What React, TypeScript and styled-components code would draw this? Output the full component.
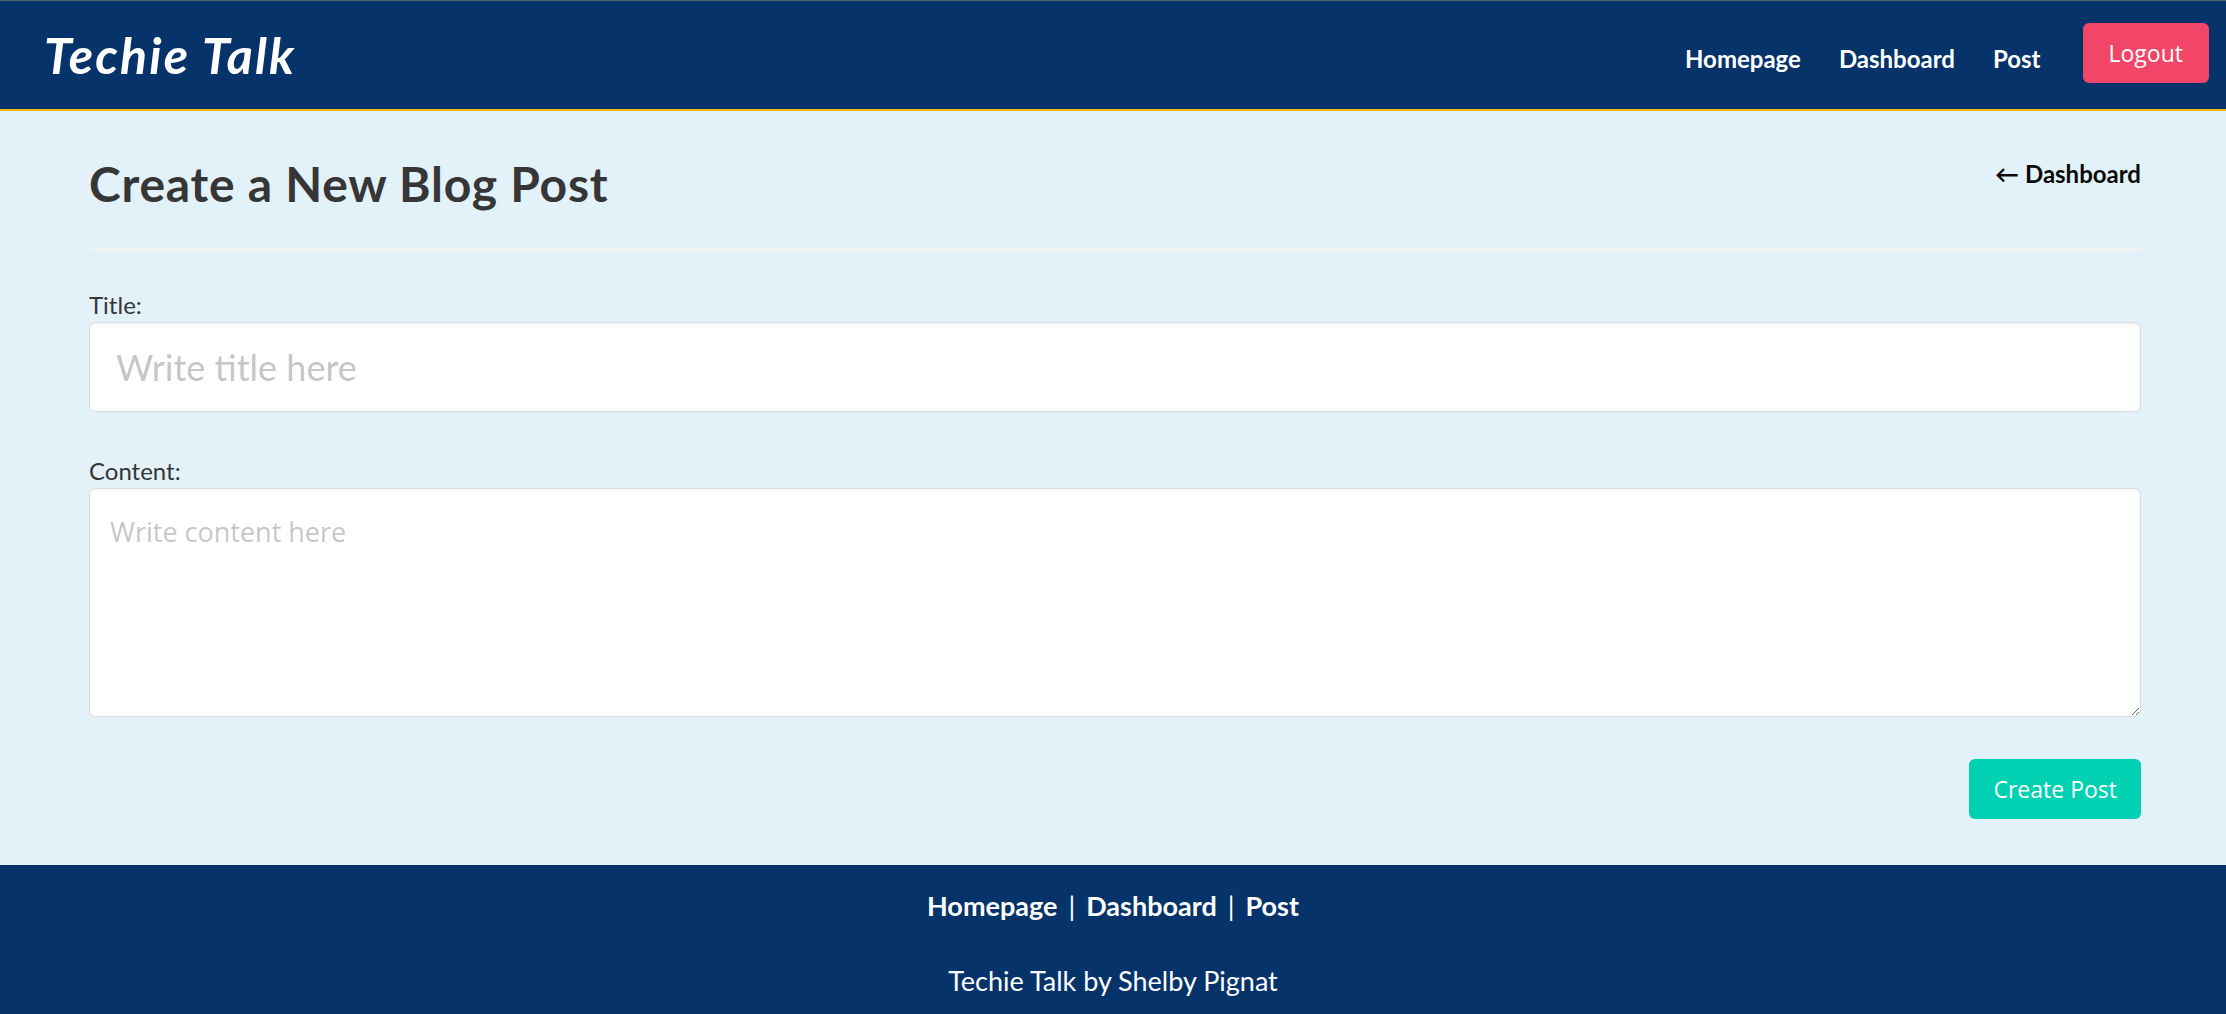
import React from "react";
import styled, { createGlobalStyle } from "styled-components";

const GlobalStyle = createGlobalStyle`
  * { box-sizing: border-box; }
  html, body { margin: 0; padding: 0; }
  body {
    background: #e3f2f8;
    font-family: Lato, "Open Sans", sans-serif;
    color: #363636;
  }
`;

const Page = styled.div`
  min-height: 1014px;
  display: flex;
  flex-direction: column;
  background: #e3f2f8;
`;

const TopBar = styled.header`
  height: 111px;
  background: #06336a;
  border-top: 1px solid #4d6669;
  border-bottom: 2px solid #f7b50f;
  display: flex;
  align-items: center;
  justify-content: space-between;
  padding: 0 17px 0 44px;
`;

const Logo = styled.a`
  font-family: Lato, sans-serif;
  font-style: italic;
  font-weight: 700;
  font-size: 50px;
  color: #ffffff;
  text-decoration: none;
  letter-spacing: 2.2px;
`;

const Nav = styled.nav`
  display: flex;
  align-items: center;
  gap: 38px;
`;

const NavLink = styled.a`
  font-family: Lato, sans-serif;
  font-weight: 700;
  font-size: 24px;
  color: #ffffff;
  text-decoration: none;
  padding-top: 6px;
`;

const Button = styled.button<{ $tone: "danger" | "primary" }>`
  font-family: "Open Sans", sans-serif;
  font-size: 23px;
  color: #ffffff;
  border: none;
  border-radius: 6px;
  height: 60px;
  padding: 0 ${(p) => (p.$tone === "danger" ? "26px" : "24px")};
  background: ${(p) => (p.$tone === "danger" ? "#f14668" : "#00d1b2")};
  cursor: pointer;
`;

const LogoutButton = styled(Button)`
  margin-left: 4px;
  margin-bottom: 4px;
`;

const Main = styled.main`
  flex: 0 0 auto;
  padding: 46px 85px 46px 89px;
`;

const HeadRow = styled.div`
  display: flex;
  justify-content: space-between;
  align-items: flex-start;
`;

const Heading = styled.h1`
  margin: 0;
  font-family: Lato, sans-serif;
  font-weight: 700;
  font-size: 48px;
  line-height: 54px;
  letter-spacing: 0.75px;
  color: #363636;
`;

const BackLink = styled.a`
  font-family: Lato, sans-serif;
  font-weight: 700;
  font-size: 24px;
  line-height: 36px;
  color: #0a0a0a;
  text-decoration: none;
  margin-top: -1px;
`;

const Divider = styled.hr`
  border: none;
  height: 3px;
  background: #f1f3f3;
  margin: 37px 0 0;
`;

const Form = styled.form`
  display: flex;
  flex-direction: column;
`;

const Field = styled.div<{ $top: number }>`
  display: flex;
  flex-direction: column;
  margin-top: ${(p) => p.$top}px;
`;

const Label = styled.label`
  font-family: Lato, sans-serif;
  font-size: 24px;
  line-height: 34px;
  color: #363636;
`;

const TitleInput = styled.input`
  height: 90px;
  width: 100%;
  border: 1px solid #dbdbdb;
  border-radius: 6px;
  background: #ffffff;
  box-shadow: inset 0 1.5px 3px rgba(10, 10, 10, 0.05);
  font-family: Lato, sans-serif;
  font-size: 36px;
  padding: 0 26px;
  color: #363636;
  outline: none;
  &::placeholder { color: rgba(54, 54, 54, 0.3); }
`;

const ContentArea = styled.textarea`
  height: 229px;
  width: 100%;
  border: 1px solid #dbdbdb;
  border-radius: 6px;
  background: #ffffff;
  box-shadow: inset 0 1.5px 3px rgba(10, 10, 10, 0.05);
  font-family: "Open Sans", sans-serif;
  font-size: 27px;
  line-height: 36px;
  padding: 25px 20px;
  color: #363636;
  resize: vertical;
  outline: none;
  &::placeholder { color: rgba(54, 54, 54, 0.3); }
`;

const Actions = styled.div`
  display: flex;
  justify-content: flex-end;
  margin-top: 42px;
`;

const Footer = styled.footer`
  flex: 1 0 auto;
  background: #06336a;
  color: #ffffff;
  text-align: center;
  padding: 22px 0 14px;
  font-family: Lato, sans-serif;
  font-size: 27px;
  line-height: 37px;
`;

const FooterLinks = styled.div`
  display: flex;
  justify-content: center;
  gap: 11px;
`;

const FooterLink = styled.a`
  font-weight: 700;
  color: #ffffff;
  text-decoration: none;
`;

const Sep = styled.span`
  font-weight: 400;
`;

const Credit = styled.p`
  margin: 38px 0 0;
`;

export default function App() {
  return (
    <Page>
      <GlobalStyle />
      <TopBar>
        <Logo href="#">Techie Talk</Logo>
        <Nav>
          <NavLink href="#">Homepage</NavLink>
          <NavLink href="#">Dashboard</NavLink>
          <NavLink href="#">Post</NavLink>
          <LogoutButton $tone="danger" type="button">Logout</LogoutButton>
        </Nav>
      </TopBar>
      <Main>
        <HeadRow>
          <Heading>Create a New Blog Post</Heading>
          <BackLink href="#">← Dashboard</BackLink>
        </HeadRow>
        <Divider />
        <Form onSubmit={(e) => e.preventDefault()}>
          <Field $top={37}>
            <Label htmlFor="title">Title:</Label>
            <TitleInput id="title" placeholder="Write title here" />
          </Field>
          <Field $top={42}>
            <Label htmlFor="content">Content:</Label>
            <ContentArea id="content" placeholder="Write content here" />
          </Field>
          <Actions>
            <Button $tone="primary" type="submit">Create Post</Button>
          </Actions>
        </Form>
      </Main>
      <Footer>
        <FooterLinks>
          <FooterLink href="#">Homepage</FooterLink>
          <Sep>|</Sep>
          <FooterLink href="#">Dashboard</FooterLink>
          <Sep>|</Sep>
          <FooterLink href="#">Post</FooterLink>
        </FooterLinks>
        <Credit>Techie Talk by Shelby Pignat</Credit>
      </Footer>
    </Page>
  );
}
